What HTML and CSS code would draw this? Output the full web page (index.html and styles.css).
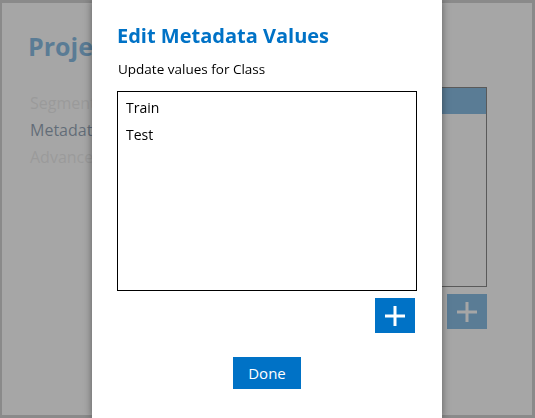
FILE: index.html
```html
<!DOCTYPE html>
<html>
<head>
<meta charset="utf-8">
<link rel="stylesheet" href="styles.css">
</head>
<body>
<div class="page">
  <aside class="nav">
    <h1 class="nav-title">Projects</h1>
    <ul class="nav-list">
      <li class="nav-item muted">Segments</li>
      <li class="nav-item active">Metadata</li>
      <li class="nav-item muted">Advanced</li>
    </ul>
  </aside>
  <section class="meta">
    <div class="meta-list">
      <div class="meta-row selected">Class</div>
    </div>
    <div class="meta-actions">
      <button class="add-btn" type="button">
        <svg width="20" height="20" viewBox="0 0 20 20"><path d="M10 0V20M0 10H20" stroke="#ffffff" stroke-width="3" fill="none"/></svg>
      </button>
    </div>
  </section>
</div>
<div class="overlay"></div>
<div class="dialog">
  <h2 class="dialog-title">Edit Metadata Values</h2>
  <p class="dialog-sub">Update values for Class</p>
  <ul class="values">
    <li class="value">Train</li>
    <li class="value">Test</li>
  </ul>
  <div class="dialog-actions">
    <button class="add-btn" type="button">
      <svg width="20" height="20" viewBox="0 0 20 20"><path d="M10 0V20M0 10H20" stroke="#ffffff" stroke-width="3" fill="none"/></svg>
    </button>
  </div>
  <div class="dialog-footer">
    <button class="done-btn" type="button">Done</button>
  </div>
</div>
</body>
</html>
```
FILE: styles.css
```css
* { box-sizing: border-box; }
html, body {
  margin: 0;
  padding: 0;
  width: 535px;
  height: 418px;
  overflow: hidden;
  font-family: "Open Sans", "Noto Sans", sans-serif;
}
body { background: #fff; }

.page {
  width: 535px;
  height: 418px;
  border-style: solid;
  border-color: #a0a0a0;
  border-width: 3px 3px 3px 2px;
  background: #fff;
  display: flex;
  padding: 0;
}

.nav {
  width: 200px;
  padding: 26px 0 0 26px;
}
.nav-title {
  margin: 0;
  font-size: 25px;
  font-weight: 700;
  color: #0072c6;
  line-height: 34px;
}
.nav-list {
  list-style: none;
  margin: 27px 0 0 2px;
  padding: 0;
}
.nav-item {
  font-size: 16px;
  line-height: 27px;
}
.nav-item.muted { color: #d8d8d8; }
.nav-item.active { color: #1a3f66; }

.meta {
  flex: 1;
  padding: 84px 45px 0 0;
  display: flex;
  flex-direction: column;
  align-items: flex-end;
}
.meta-list {
  width: 200px;
  height: 200px;
  border: 1px solid #000;
  background: #fff;
}
.meta-row {
  height: 26px;
  font-size: 14px;
  line-height: 26px;
  padding-left: 8px;
}
.meta-row.selected { background: #0072c6; color: #fff; }
.meta-actions {
  margin-top: 7px;
  margin-right: 0;
}

.overlay {
  position: fixed;
  inset: 0;
  background: rgba(128, 128, 128, 0.7);
}

.dialog {
  position: fixed;
  top: 0;
  bottom: 0;
  left: 92px;
  width: 350px;
  background: #fff;
  box-shadow: 0 0 8px rgba(0, 0, 0, 0.45);
  padding: 22px 25px 0 25px;
  display: flex;
  flex-direction: column;
}
.dialog-title {
  margin: 0;
  font-size: 20px;
  font-weight: 700;
  color: #0072c6;
  line-height: 28px;
}
.dialog-sub {
  margin: 10px 0 0 1px;
  font-size: 13.5px;
  line-height: 18px;
  color: #000;
}
.values {
  list-style: none;
  margin: 13px 0 0 0;
  padding: 2px 0 0 8px;
  height: 200px;
  border: 1px solid #000;
}
.value {
  font-size: 14px;
  line-height: 27px;
  color: #000;
}
.dialog-actions {
  display: flex;
  justify-content: flex-end;
  margin-top: 7px;
  padding-right: 2px;
}
.add-btn {
  width: 40px;
  height: 35px;
  border: none;
  padding: 0;
  margin: 0;
  background: #0072c6;
  display: flex;
  align-items: center;
  justify-content: center;
}
.dialog-footer {
  display: flex;
  justify-content: center;
  margin-top: 24px;
}
.done-btn {
  width: 68px;
  height: 32px;
  border: none;
  margin: 0;
  padding: 0;
  background: #0072c6;
  color: #fff;
  font-family: "Open Sans", "Noto Sans", sans-serif;
  font-size: 15px;
}
```
